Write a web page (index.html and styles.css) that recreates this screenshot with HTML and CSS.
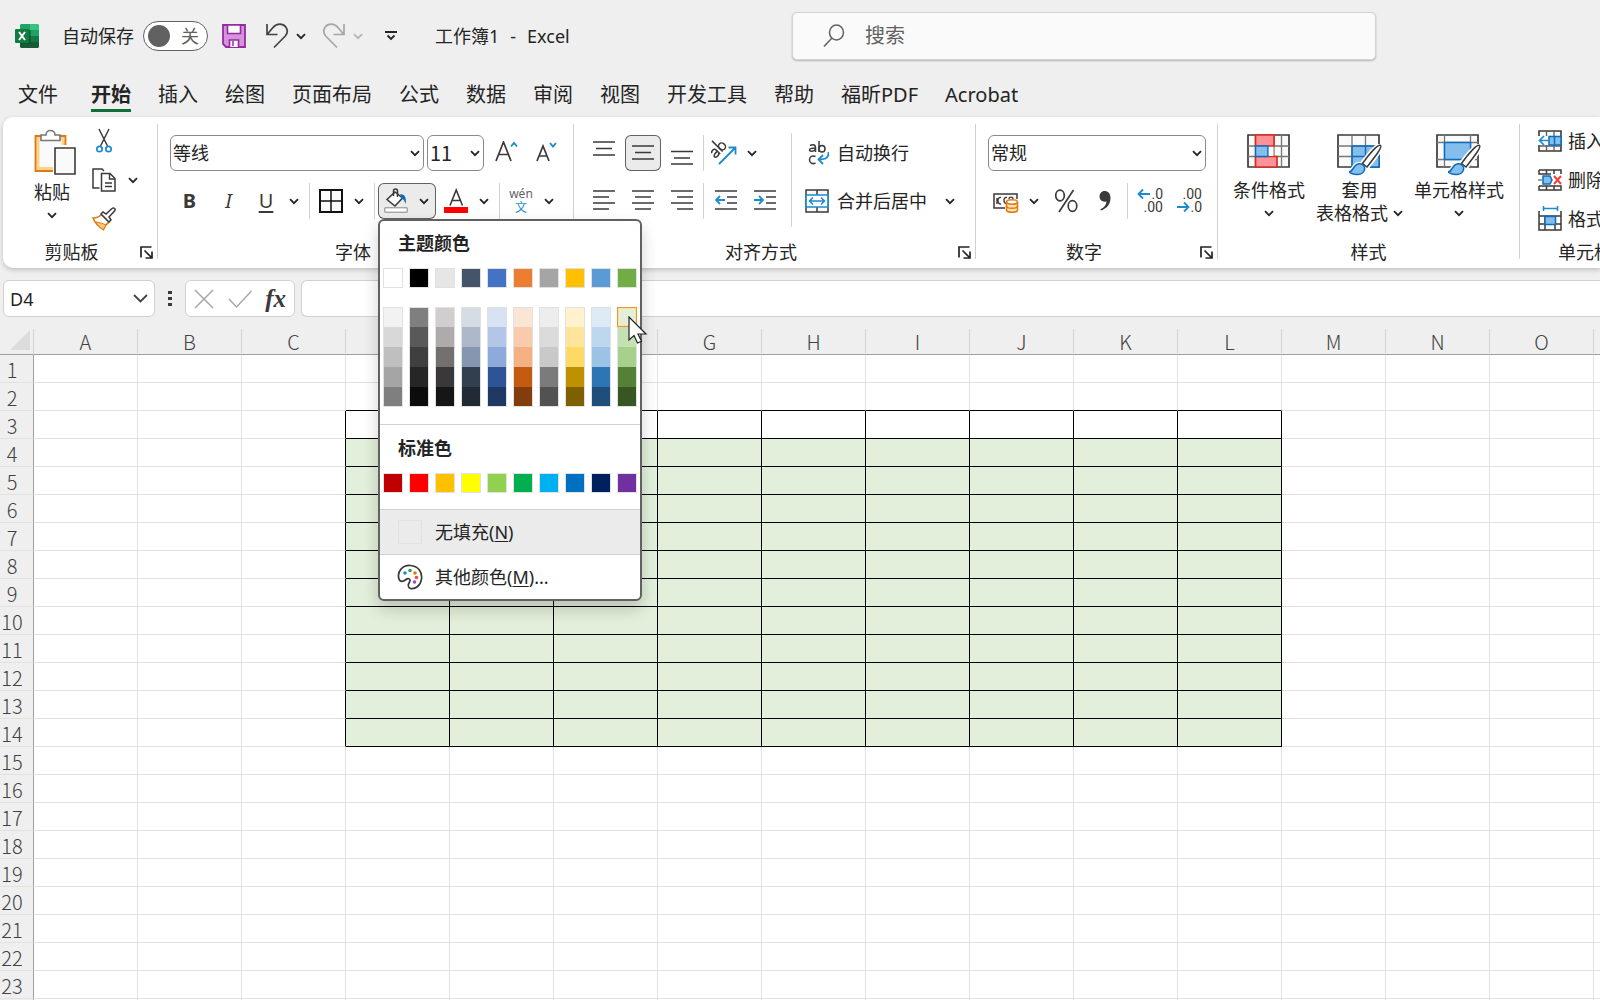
FILE: index.html
```html
<!DOCTYPE html>
<html lang="zh-CN">
<head>
  <meta charset="UTF-8" />
  <title>工作簿1 - Excel</title>
  <meta name="viewport" content="width=device-width, initial-scale=1.0" />
  <link rel="stylesheet" href="styles.css">
</head>
<body>
  <!-- shared icons -->
  <svg class="defs" width="0" height="0" aria-hidden="true">
    <symbol id="chev" viewBox="0 0 10 7"><path d="M1 1.2l4 4 4-4" fill="none" stroke="currentColor" stroke-width="1.8"/></symbol>
    <symbol id="launch" viewBox="0 0 13 13"><path d="M1 11.5V1h10.5M4.5 4.5l7 7M12 5.5V12H5.5" fill="none" stroke="currentColor" stroke-width="1.7"/></symbol>
    <symbol id="brush" viewBox="0 0 34 32">
      <path d="M31.500 1.500C33.500 3 27 11.500 18 23l-4.500-3.500C20 10.500 29 0 31.500 1.500z" fill="#fff" stroke="#fff" stroke-width="5"/>
      <path d="M0 28c4 0 4-7 9-8 5-1 8 3 6 7s-9 5-15 1z" fill="#83beec" stroke="#fff" stroke-width="4"/>
      <path d="M31.500 1.500C33.500 3 27 11.500 18 23l-4.500-3.500C20 10.500 29 0 31.500 1.500z" fill="#fff" stroke="#3b3a39" stroke-width="1.500"/>
      <path d="M0 28c4 0 4-7 9-8 5-1 8 3 6 7s-9 5-15 1z" fill="#83beec" stroke="#0f6cbd" stroke-width="1.500"/>
    </symbol>
  </svg>

  <header class="titlebar">
    <div class="quick">
      <svg class="logo" width="24" height="24" viewBox="0 0 24 24">
        <path d="M6 0h9v6H5V1z" fill="#21a366"/><path d="M15 0h8l1 1v5h-9z" fill="#33c481"/>
        <path d="M5 6h10v6H5z" fill="#107c41"/><path d="M15 6h9v6h-9z" fill="#21a366"/>
        <path d="M5 12h10v6H5z" fill="#185c37"/><path d="M15 12h9v6h-9z" fill="#107c41"/>
        <path d="M5 18h19v5l-1 1H6l-1-1z" fill="#185c37"/>
        <rect x="5" y="6" width="11" height="14" fill="#0b4a28" opacity=".5"/>
        <rect y="5" width="14" height="14" rx="1" fill="#107c41"/>
        <path d="M4 8l6 8M10 8l-6 8" stroke="#fff" stroke-width="2"/>
      </svg>
      <span class="autosave">自动保存</span>
      <button class="toggle" role="switch" aria-checked="false" aria-label="自动保存"><span class="knob"></span>关</button>
      <button class="icon-btn save" aria-label="保存">
        <svg width="24" height="24" viewBox="0 0 24 24"><path d="M1 1h22v22H4l-3-3z" fill="#d493da" stroke="#952ba0" stroke-width="1.800"/><path d="M5.500 1h13v8.500h-13zM7.500 23v-7h9v7" fill="#fafafa" stroke="#952ba0" stroke-width="1.600"/><path d="M11 17v5" stroke="#952ba0" stroke-width="1.500"/></svg>
      </button>
      <button class="icon-btn undo" aria-label="撤消">
        <svg width="24" height="26" viewBox="0 0 24 26"><path d="M2 1v10.500h10.500M2.500 11L8 4.500C12-.2 18 .3 20.800 4c2 3 1.700 6.500-.5 9L9 24.500" fill="none" stroke="#424242" stroke-width="1.700"/></svg>
      </button>
      <button class="icon-btn" aria-label="撤消选项"><svg width="10" height="7"><use href="#chev"/></svg></button>
      <button class="icon-btn redo" aria-label="恢复" disabled>
        <svg width="24" height="26" viewBox="0 0 24 26"><path d="M22 1v10.500H11.500M21.500 11L16 4.500C12-.2 6 .3 3.200 4c-2 3-1.700 6.500.5 9L15 24.500" fill="none" stroke="#a6a6a6" stroke-width="1.700"/></svg>
      </button>
      <button class="icon-btn faded" aria-label="恢复选项" disabled><svg width="10" height="7"><use href="#chev"/></svg></button>
      <button class="icon-btn customize" aria-label="自定义快速访问工具栏">
        <svg width="12" height="10" viewBox="0 0 12 10"><path d="M0 1h12M2.500 4.500L6 8l3.500-3.500" fill="none" stroke="#242424" stroke-width="1.800"/></svg>
      </button>
      <span class="doc-title"><span>工作簿1</span><span>-</span><span>Excel</span></span>
    </div>
    <label class="search">
      <svg width="22" height="24" viewBox="0 0 22 24"><ellipse cx="13.500" cy="8.500" rx="7" ry="7.500" fill="none" stroke="#616161" stroke-width="1.500"/><path d="M9 14L1 22.500" stroke="#616161" stroke-width="1.500"/></svg>
      <input type="text" placeholder="搜索" aria-label="搜索">
    </label>
  </header>

  <nav class="tabs">
    <a href="#" class="file">文件</a>
    <a href="#" class="active">开始</a>
    <a href="#">插入</a>
    <a href="#">绘图</a>
    <a href="#">页面布局</a>
    <a href="#">公式</a>
    <a href="#">数据</a>
    <a href="#">审阅</a>
    <a href="#">视图</a>
    <a href="#">开发工具</a>
    <a href="#">帮助</a>
    <a href="#">福昕PDF</a>
    <a href="#">Acrobat</a>
  </nav>

  <section class="ribbon">
    <!-- clipboard -->
    <div class="group clipboard">
      <div class="group-body">
        <button class="big paste">
          <svg width="48" height="46" viewBox="-6 0 48 46">
            <path d="M1.500 7h30v35h-30z" fill="#f9d48a" stroke="#e07a10" stroke-width="1.800"/><path d="M5.500 10h22v28h-22z" fill="#fafafa"/>
            <path d="M19 16h23v30H19z" fill="#fff"/>
            <path d="M7 11.500V6h5c0-6 9-6 9 0h5v5.500z" fill="#fff" stroke="#797775" stroke-width="1.600"/>
            <path d="M21 19h20v26H21z" fill="#fafafa" stroke="#3b3a39" stroke-width="1.600"/>
          </svg>
          <span>粘贴</span>
          <svg width="10" height="7"><use href="#chev"/></svg>
        </button>
        <div class="stack">
          <button aria-label="剪切"><svg width="24" height="26" viewBox="0 0 24 26"><path d="M7 1l8.500 17M17 1L8.500 18" fill="none" stroke="#3b3a39" stroke-width="1.500"/><circle cx="7.500" cy="21" r="2.700" fill="#fff" stroke="#1e8bcd" stroke-width="1.700"/><circle cx="16.500" cy="21" r="2.700" fill="#fff" stroke="#1e8bcd" stroke-width="1.700"/></svg></button>
          <button aria-label="复制"><svg width="24" height="24" viewBox="0 0 24 24"><path d="M7.500 20H1V1h9l2 2" fill="none" stroke="#3b3a39" stroke-width="1.500"/><path d="M9.500 5.500h8.500l5 5V23H9.500z" fill="#fff" stroke="#3b3a39" stroke-width="1.500"/><path d="M17.500 5.500V11H23M13 15h7M13 18.500h7" fill="none" stroke="#3b3a39" stroke-width="1.400"/></svg><svg class="after" width="10" height="7"><use href="#chev"/></svg></button>
          <button aria-label="格式刷"><svg width="24" height="24" viewBox="0 0 24 24"><path d="M1 11c4 0 6-1 8.500-3.500L17 15c-3 2-4.500 5-5.500 7.500C7 20 3 16 1 11z" fill="#fff" stroke="#e07a10" stroke-width="1.600"/><path d="M4 15c4 .5 7 1.500 10 3l-2.500 4.500C8 21 5.500 18.500 4 15z" fill="#f9c57a" stroke="#e07a10"/><path d="M9 7l2-2 3 2 6-5.500c2-1.500 4 .8 2.500 2.500L17 10l2 3-2 2z" fill="#fff" stroke="#3b3a39" stroke-width="1.500"/></svg></button>
        </div>
      </div>
      <div class="group-foot"><span>剪贴板</span><button aria-label="剪贴板设置"><svg width="13" height="13"><use href="#launch"/></svg></button></div>
    </div>

    <!-- font -->
    <div class="group font">
      <div class="group-body rows">
        <div class="row">
          <div class="combo family"><select aria-label="字体"><option>等线</option></select><svg width="10" height="7"><use href="#chev"/></svg></div>
          <div class="combo size"><select aria-label="字号"><option>11</option></select><svg width="10" height="7"><use href="#chev"/></svg></div>
          <button class="tool" aria-label="增大字号"><svg width="24" height="24" viewBox="0 0 24 24"><path d="M1 20L8.500 1 16 20M3.500 13.500h10" fill="none" stroke="#3b3a39" stroke-width="1.700"/><path d="M16 5.500L19 2l3 3.500" fill="none" stroke="#1e8bcd" stroke-width="1.900"/></svg></button>
          <button class="tool" aria-label="减小字号"><svg width="24" height="24" viewBox="0 0 24 24"><path d="M3 20L9 5l6 15M5 15h8" fill="none" stroke="#3b3a39" stroke-width="1.700"/><path d="M16 2L19 5.500 22 2" fill="none" stroke="#1e8bcd" stroke-width="1.900"/></svg></button>
        </div>
        <div class="row">
          <button class="tool letter"><b>B</b></button>
          <button class="tool letter"><i>I</i></button>
          <div class="split"><button class="letter" aria-label="下划线"><u>U</u></button><button aria-label="下划线选项"><svg width="10" height="7"><use href="#chev"/></svg></button></div>
          <span class="bar"></span>
          <div class="split"><button aria-label="边框"><svg width="24" height="24" viewBox="0 0 24 24"><path d="M1 1h22v22H1z" fill="#fafafa" stroke="#111" stroke-width="2"/><path d="M12 1v22M1 12h22" stroke="#111" stroke-width="1.500"/></svg></button><button aria-label="边框选项"><svg width="10" height="7"><use href="#chev"/></svg></button></div>
          <span class="bar"></span>
          <div class="split pressed">
            <button aria-label="填充颜色"><svg width="24" height="26" viewBox="0 0 24 26"><path d="M3 11.500l8-7.500 7.500 6-7.500 8z" fill="#fff" stroke="#3b3a39" stroke-width="1.600"/><path d="M9.500 8V3c0-2.600 4-2.600 4 0v6" fill="none" stroke="#3b3a39" stroke-width="1.500"/><path d="M16 6.500c4.500-1 7 3.500 5.500 9.500-1-3-2-5-4-6z" fill="#0f6cbd"/><path d="M.8 19.800h22.400v4.400H.8z" fill="#fff" stroke="#8a8886"/></svg></button>
            <button aria-label="填充颜色选项" aria-expanded="true"><svg width="10" height="7"><use href="#chev"/></svg></button>
            <div class="palette">
              <h2>主题颜色</h2>
              <div class="swatches" id="theme"></div>
              <div class="swatches shades" id="shades"></div>
              <h2 class="second">标准色</h2>
              <div class="swatches" id="standard"></div>
              <button class="item hover"><span class="none"></span><span>无填充(<u>N</u>)</span></button>
              <button class="item">
                <svg width="26" height="26" viewBox="0 0 26 26"><path d="M2 15C-.5 7 6 1 13.500 1.500 21 2 25.500 8 24.500 15 23.500 22 18 25.500 13.500 24.500c-3-1-2.500-4-1-6.500 1.500-3-1-4.500-3.500-2.500C6.500 17.500 3 18.500 2 15z" fill="#fff" stroke="#3b3a39" stroke-width="1.700"/><circle cx="8" cy="9" r="1.800" fill="#1e8bcd"/><circle cx="13" cy="6.500" r="1.800" fill="#2ea04f"/><circle cx="18" cy="9" r="1.800" fill="#e07a10"/><circle cx="19.500" cy="13.500" r="1.800" fill="#f04a4a"/><circle cx="17.500" cy="18" r="1.800" fill="#a347ba"/></svg>
                <span>其他颜色(<u>M</u>)...</span>
              </button>
              <svg class="pointer" width="20" height="29" viewBox="0 0 20 29"><path d="M1 1v23l5-4.500 3.500 7.500 4-1.800L10 18h8z" fill="#fff" stroke="#222" stroke-width="1.200"/></svg>
            </div>
          </div>
          <div class="split"><button aria-label="字体颜色"><svg width="24" height="26" viewBox="0 0 24 26"><path d="M6 17.500L12.200 2l6.300 15.500M8 12.500h8.500" fill="none" stroke="#3b3a39" stroke-width="1.600"/><path d="M0 19h24v6H0z" fill="#f00"/></svg></button><button aria-label="字体颜色选项"><svg width="10" height="7"><use href="#chev"/></svg></button></div>
          <span class="bar"></span>
          <div class="split"><button class="pinyin" aria-label="拼音"><span>wén</span><span class="blue">文</span></button><button aria-label="拼音选项"><svg width="10" height="7"><use href="#chev"/></svg></button></div>
        </div>
      </div>
      <div class="group-foot"><span>字体</span><button aria-label="字体设置"><svg width="13" height="13"><use href="#launch"/></svg></button></div>
    </div>

    <!-- alignment -->
    <div class="group align">
      <div class="group-body">
        <div class="rows">
          <div class="row">
            <button class="tool" aria-label="顶端对齐"><svg width="22" height="24" viewBox="0 0 22 24"><path d="M0 1h22M3 7.500h16M0 14h22" stroke="#3b3a39" stroke-width="1.500"/></svg></button>
            <button class="tool pressed" aria-label="垂直居中" aria-pressed="true"><svg width="22" height="24" viewBox="0 0 22 24"><path d="M0 5h22M3 11.500h16M0 18h22" stroke="#3b3a39" stroke-width="1.500"/></svg></button>
            <button class="tool" aria-label="底端对齐"><svg width="22" height="24" viewBox="0 0 22 24"><path d="M0 10.500h22M3 17h16M0 23h22" stroke="#3b3a39" stroke-width="1.500"/></svg></button>
            <span class="bar"></span>
            <div class="split"><button aria-label="方向"><svg width="26" height="26" viewBox="0 0 26 26"><path d="M8 24L24 8M17.500 7.500H24.500V14.500" fill="none" stroke="#1e8bcd" stroke-width="1.800"/><g fill="none" stroke="#3b3a39" stroke-width="1.500" transform="translate(-2 -2) rotate(-45 9 11)"><path d="M1.500 9.500C3 7.500 7 7.500 7 10.500V16M7 12C3 12 1 12.500 1 14s4 3 6 0M10.500 1v15"/><ellipse cx="13.700" cy="12" rx="3.200" ry="3.700"/></g></svg></button><button aria-label="方向选项"><svg width="10" height="7"><use href="#chev"/></svg></button></div>
          </div>
          <div class="row">
            <button class="tool" aria-label="左对齐"><svg width="22" height="24" viewBox="0 0 22 24"><path d="M0 2h22M0 8h16M0 14h22M0 20h16" stroke="#3b3a39" stroke-width="1.500"/></svg></button>
            <button class="tool" aria-label="居中"><svg width="22" height="24" viewBox="0 0 22 24"><path d="M0 2h22M3 8h16M0 14h22M3 20h16" stroke="#3b3a39" stroke-width="1.500"/></svg></button>
            <button class="tool" aria-label="右对齐"><svg width="22" height="24" viewBox="0 0 22 24"><path d="M0 2h22M6 8h16M0 14h22M6 20h16" stroke="#3b3a39" stroke-width="1.500"/></svg></button>
            <span class="bar"></span>
            <button class="tool" aria-label="减少缩进量"><svg width="22" height="24" viewBox="0 0 22 24"><path d="M0 2h22M12 8h10M12 14h10M0 20h22" stroke="#3b3a39" stroke-width="1.500"/><path d="M10 11H1.500M5 7l-4 4 4 4" fill="none" stroke="#1e8bcd" stroke-width="1.800"/></svg></button>
            <button class="tool" aria-label="增加缩进量"><svg width="22" height="24" viewBox="0 0 22 24"><path d="M0 2h22M12 8h10M12 14h10M0 20h22" stroke="#3b3a39" stroke-width="1.500"/><path d="M0 11h8.500M5 7l4 4-4 4" fill="none" stroke="#1e8bcd" stroke-width="1.800"/></svg></button>
          </div>
        </div>
        <div class="rows wrap">
          <button class="row text-btn"><svg width="24" height="26" viewBox="0 0 24 26"><g fill="none" stroke="#3b3a39" stroke-width="1.500"><path d="M5 5.500c4-2 5.500 0 5.500 2V12M10.500 8C5 8 4.500 9 4.500 10s4 2.500 6-1M14 1v11"/><ellipse cx="17" cy="8.700" rx="3" ry="3.300"/><path d="M10.500 16.500c-3-1.500-6 0-6 3.300s3 4.700 6 3.200"/></g><path d="M23.500 12c.5 5-2 7.500-9.500 7.500M18 15l-4.500 4.500L18 24" fill="none" stroke="#1e8bcd" stroke-width="1.800"/></svg><span>自动换行</span></button>
          <div class="row">
            <button class="row text-btn"><svg width="24" height="24" viewBox="0 0 24 24"><path d="M1 1h22v22H1zM12 1v22" fill="#fafafa" stroke="#3b3a39" stroke-width="1.500"/><path d="M1 6h22v12H1z" fill="#fff" stroke="#1e8bcd" stroke-width="1.700"/><path d="M4.500 12h15M8 8.500L4.500 12 8 15.500M16 8.500l3.500 3.500-3.500 3.500" fill="none" stroke="#1e8bcd" stroke-width="1.600"/></svg><span>合并后居中</span></button>
            <button class="more" aria-label="合并选项"><svg width="10" height="7"><use href="#chev"/></svg></button>
          </div>
        </div>
      </div>
      <div class="group-foot"><span>对齐方式</span><button aria-label="对齐设置"><svg width="13" height="13"><use href="#launch"/></svg></button></div>
    </div>

    <!-- number -->
    <div class="group number">
      <div class="group-body rows">
        <div class="row">
          <div class="combo format"><select aria-label="数字格式"><option>常规</option></select><svg width="10" height="7"><use href="#chev"/></svg></div>
        </div>
        <div class="row">
          <div class="split"><button aria-label="会计数字格式"><svg width="26" height="24" viewBox="0 0 26 24"><path d="M12 19H1V5h23v5" fill="#fafafa" stroke="#3b3a39" stroke-width="1.500"/><path d="M8 8.500c-4-1-4 7 0 6.500M14 8.500c-4-1-4 6 0 6M16 10c0-2.500 4-2.500 4 0M4 9v6" fill="none" stroke="#3b3a39" stroke-width="1.400"/><path d="M13.500 13v8c0 3 11 3 11 0v-8" fill="#fce1bb" stroke="#e07a10" stroke-width="1.600"/><ellipse cx="19" cy="13" rx="5.500" ry="2.200" fill="#fff" stroke="#e07a10" stroke-width="1.600"/><path d="M13.500 17c0 3 11 3 11 0" fill="none" stroke="#e07a10" stroke-width="1.500"/></svg></button><button aria-label="货币选项"><svg width="10" height="7"><use href="#chev"/></svg></button></div>
          <button class="tool" aria-label="百分比样式"><svg width="24" height="24" viewBox="0 0 24 24"><g fill="none" stroke="#3b3a39" stroke-width="1.700"><ellipse cx="6" cy="6.500" rx="4.300" ry="5.300"/><ellipse cx="18.500" cy="17" rx="4.300" ry="5.300"/><path d="M19.500 1L5 23"/></g></svg></button>
          <button class="tool" aria-label="千位分隔样式"><svg width="12" height="20" viewBox="0 0 12 20"><path d="M5.500 0C9 0 11.500 2.500 11.500 7c0 6.500-4 10.500-9.500 12.500l-.7-1.200C5 16.500 7 14.500 7.500 10.500 3.500 11.500.5 9 .5 5.500.5 2.500 2.500 0 5.500 0z" fill="#3b3a39"/></svg></button>
          <span class="bar"></span>
          <button class="tool decimals" aria-label="增加小数位数"><span><svg width="14" height="12" viewBox="0 0 14 12"><path d="M13 6H1.500M6 1.500L1.500 6 6 10.500" fill="none" stroke="#1e8bcd" stroke-width="1.800"/></svg>.0</span><span>.00</span></button>
          <button class="tool decimals" aria-label="减少小数位数"><span>.00</span><span><svg width="14" height="12" viewBox="0 0 14 12"><path d="M1 6h11.500M8 1.500L12.500 6 8 10.500" fill="none" stroke="#1e8bcd" stroke-width="1.800"/></svg>.0</span></button>
        </div>
      </div>
      <div class="group-foot"><span>数字</span><button aria-label="数字设置"><svg width="13" height="13"><use href="#launch"/></svg></button></div>
    </div>

    <!-- styles -->
    <div class="group looks">
      <div class="group-body">
        <button class="big">
          <svg width="46" height="42" viewBox="0 0 46 42"><path d="M2 1h41v32H2z" fill="#fafafa" stroke="#3b3a39" stroke-width="1.700"/><path d="M2 12h41M2 22.500h41M9.500 1v32M28 1v32M35.500 1v32" stroke="#797775" stroke-width="1.300"/><path d="M9.500 1H28v11H9.500zM9.500 22.500h21.500V33H9.500z" fill="#ff9199" stroke="#d92c20" stroke-width="1.700"/><path d="M9.500 12H22v10.500H9.500z" fill="#83beec" stroke="#0f6cbd" stroke-width="1.500"/><path d="M22.800 12.800h4.500v9h-4.500z" fill="#fafafa"/></svg>
          <span>条件格式</span>
          <svg width="10" height="7"><use href="#chev"/></svg>
        </button>
        <button class="big">
          <svg width="46" height="42" viewBox="0 0 46 42"><path d="M1 1h41v32H1z" fill="#fafafa" stroke="#3b3a39" stroke-width="1.700"/><path d="M15 12h27v21H15z" fill="#83beec"/><path d="M1 12h41M1 22.500h14M15 1v32M28.500 1v11" stroke="#797775" stroke-width="1.300"/><path d="M15 33V12h27v21zM15 22.500h27M28.500 12v21" fill="none" stroke="#0f6cbd" stroke-width="1.500"/><use href="#brush" x="12" y="10" width="34" height="32"/></svg>
          <span>套用</span>
          <span class="line">表格格式<svg width="10" height="7"><use href="#chev"/></svg></span>
        </button>
        <button class="big">
          <svg width="46" height="42" viewBox="0 0 46 42"><path d="M1 1h41v32H1z" fill="#fafafa" stroke="#3b3a39" stroke-width="1.700"/><path d="M1 8.500h41M1 25.500h41M8.500 1v32M34.500 1v32" stroke="#797775" stroke-width="1.300"/><path d="M8.500 8.500h26v17h-26z" fill="#83beec" stroke="#0f6cbd" stroke-width="1.500"/><use href="#brush" x="12" y="10" width="34" height="32"/></svg>
          <span>单元格样式</span>
          <svg width="10" height="7"><use href="#chev"/></svg>
        </button>
      </div>
      <div class="group-foot"><span>样式</span></div>
    </div>

    <!-- cells -->
    <div class="group cells">
      <div class="group-body">
        <div class="stack">
          <button><svg width="24" height="24" viewBox="0 0 24 24"><path d="M1 2h22v20H1z" fill="#fafafa" stroke="#3b3a39" stroke-width="1.600"/><path d="M8.500 2v20M16 2v20M1 17h22" stroke="#605e5c" stroke-width="1.300"/><path d="M0 7h12v9H0z" fill="#fff"/><path d="M11 7.500h12v8.500H11zM16.500 7.500V16" fill="#83beec" stroke="#0f6cbd" stroke-width="1.500"/><path d="M11 11.500H1.500M6 7l-4.500 4.500L6 16" fill="none" stroke="#1e8bcd" stroke-width="1.700"/></svg><span>插入</span></button>
          <button><svg width="24" height="24" viewBox="0 0 24 24"><path d="M1 2h22v4M1 2v4h12M1 18v4h22v-4H1M8.500 2v4M16 2v4M8.500 18v4M16 18v4" fill="none" stroke="#3b3a39" stroke-width="1.500"/><path d="M5 8h7l2 4-2 4H5z" fill="#83beec" stroke="#0f6cbd" stroke-width="1.500"/><path d="M0 12h4" stroke="#3b3a39"/><path d="M16 8l7 8M23 8l-7 8" stroke="#f0413c" stroke-width="2"/></svg><span>删除</span></button>
          <button><svg width="24" height="26" viewBox="0 0 24 26"><path d="M1 5v19h22V5M1 10h22M1 18h22M7 10v14M17 10v14" fill="none" stroke="#3b3a39" stroke-width="1.500"/><path d="M7 10.500h10.500v8H7z" fill="#83beec" stroke="#0f6cbd" stroke-width="1.500"/><path d="M5.500 2.500h14M5.500 0v5M19.500 0v5" stroke="#1e8bcd" stroke-width="1.600"/></svg><span>格式</span></button>
        </div>
      </div>
      <div class="group-foot"><span>单元格</span></div>
    </div>
  </section>

  <section class="formula-bar">
    <label class="name-box"><input type="text" value="D4" aria-label="名称框"><svg width="15" height="9" viewBox="0 0 15 9"><path d="M1 1l6.500 6.500L14 1" fill="none" stroke="#424242" stroke-width="1.800"/></svg></label>
    <svg class="dots" width="4" height="16" viewBox="0 0 4 16"><path d="M0 0h4v3H0zM0 6h4v3H0zM0 12h4v3H0z" fill="#3b3a39"/></svg>
    <div class="fx-box">
      <button aria-label="取消"><svg width="20" height="20" viewBox="0 0 20 20"><path d="M1 1l18 18M19 1L1 19" stroke="#a6a6a6" stroke-width="1.500"/></svg></button>
      <button aria-label="输入"><svg width="24" height="20" viewBox="0 0 24 20"><path d="M1 10l7.500 8L23.500 2" fill="none" stroke="#a6a6a6" stroke-width="1.500"/></svg></button>
      <button class="fx" aria-label="插入函数">fx</button>
    </div>
    <input class="formula" type="text" aria-label="编辑栏">
  </section>

  <main class="sheet">
    <table id="grid"></table>
  </main>

  <script src="script.js"></script>
</body>
</html>
```
FILE: styles.css
```css
:root {
  --bg: #efefef;
  --text: #242424;
  --line: #d1d1d1;
  --grid: #e1e1e1;
  --green: #0f703b;
  --fill: #e2efda;
  --ui: "Noto Sans", "Noto Sans CJK SC", sans-serif;
}

* {
  box-sizing: border-box;
}

body {
  margin: 0;
  height: 100vh;
  overflow: hidden;
  display: flex;
  flex-direction: column;
  background: var(--bg);
  color: var(--text);
  font-family: var(--ui);
  font-size: 18px;
  line-height: 24px;
}

button,
input,
select {
  font: inherit;
  color: inherit;
  border: none;
  background: none;
  padding: 0;
  margin: 0;
  outline: none;
}

svg {
  display: block;
  flex: none;
}

.defs {
  position: absolute;
}

/* title bar */
.titlebar {
  flex: none;
  height: 72px;
  display: grid;
  grid-template-columns: 49.5% 36.5%;
  align-items: center;
}

.quick {
  display: flex;
  align-items: center;
  padding-left: 15px;
  white-space: nowrap;
}

.autosave {
  margin: 0 9px 0 23px;
}

.toggle {
  display: flex;
  align-items: center;
  justify-content: space-between;
  width: 65px;
  height: 30px;
  padding: 0 8px 0 4px;
  border: 1px solid #616161;
  border-radius: 15px;
  background: #fff;
  color: #616161;
}

.knob {
  width: 22px;
  height: 22px;
  border-radius: 50%;
  background: #616161;
}

.save {
  margin-left: 14px;
}

.undo {
  margin: 0 7px 0 19px;
}

.redo {
  margin: 0 7px 0 16px;
}

.faded {
  color: #b5b5b5;
}

.customize {
  margin-left: 22px;
}

.doc-title {
  display: flex;
  gap: 11px;
  margin-left: 38px;
}

.search {
  display: flex;
  align-items: center;
  gap: 20px;
  height: 48px;
  padding-left: 30px;
  border: 1px solid #d4d4d4;
  border-radius: 5px;
  background: #fafafa;
  box-shadow: 0 1px 2px rgba(0, 0, 0, 0.25);
  font-size: 20px;
}

.search input {
  flex: 1;
  min-width: 0;
}

.search input::placeholder {
  color: #616161;
  opacity: 1;
}

/* tabs */
.tabs {
  flex: none;
  display: flex;
  gap: 27px;
  height: 45px;
  padding: 11px 18px 0;
  font-size: 20px;
  white-space: nowrap;
}

.tabs a {
  height: 29px;
  color: inherit;
  text-decoration: none;
}

.tabs .file {
  margin-right: 6px;
}

.tabs .active {
  font-weight: bold;
  border-bottom: 3px solid var(--green);
}

/* ribbon */
.ribbon {
  flex: none;
  display: flex;
  height: 151px;
  margin-left: 3px;
  padding: 7px 0 9px;
  background: #fff;
  border-radius: 10px 0 0 10px;
  box-shadow: 0 2px 5px rgba(0, 0, 0, 0.2);
  white-space: nowrap;
}

.group {
  flex: none;
  display: flex;
  flex-direction: column;
  border-right: 1px solid var(--line);
}

.group-body {
  flex: 1;
  display: flex;
}

.group-foot {
  display: flex;
  align-items: center;
  height: 14px;
}

.group-foot span {
  flex: 1;
  text-align: center;
}

.group-foot button {
  margin-right: 4px;
}

.clipboard { width: 155px; }
.font { width: 416px; padding-left: 12px; }
.align { width: 402px; padding-left: 10px; }
.number { width: 242px; padding-left: 12px; }
.looks { width: 302px; }
.cells { width: 136px; border: none; }

.font .group-foot,
.number .group-foot,
.align .group-foot {
  margin-left: -20px;
}

.rows {
  display: flex;
  flex-direction: column;
  gap: 12px;
  padding-top: 11px;
}

.row {
  display: flex;
  align-items: center;
  height: 36px;
}

.tool,
.split > button {
  display: flex;
  align-items: center;
  justify-content: center;
  width: 39px;
  height: 36px;
}

.split {
  position: relative;
  display: flex;
  width: 58px;
}

.split > button {
  width: 36px;
}

.split > button + button {
  width: 20px;
}

.pressed {
  background: #ebebeb;
  border-radius: 6px;
  box-shadow: inset 0 0 0 1px #616161;
}

.tool.pressed {
  width: 36px;
  margin: 0 1px 0 2px;
}

.split.pressed {
  margin-right: 2px;
}

.letter {
  font-size: 20px;
  color: #3b3a39;
}

.letter i {
  font-family: "Noto Sans", serif;
}

.letter u {
  text-underline-offset: 3px;
}

.bar {
  width: 1px;
  height: 36px;
  margin: 0 3px;
  background: var(--line);
}

.align .bar {
  margin: 0 2px;
}

.combo {
  position: relative;
  height: 36px;
  margin-right: 3px;
}

.combo.family { width: 254px; }
.combo.size { width: 57px; }
.combo.format { width: 218px; margin-right: 0; }

.combo select {
  width: 100%;
  height: 36px;
  padding-left: 2px;
  border: 1px solid #8a8a8a;
  border-radius: 6px;
  background: #fff;
  appearance: none;
}

.combo.size select {
  font-family: "Noto Sans CJK SC", sans-serif;
  font-size: 20px;
}

.combo svg {
  position: absolute;
  top: 15px;
  right: 4px;
  pointer-events: none;
}

.split .pinyin {
  flex-direction: column;
  font-size: 12px;
  line-height: 14px;
  color: #616161;
}

.pinyin .blue {
  color: #1e8bcd;
}

.decimals {
  flex-direction: column;
  align-items: stretch;
  padding: 0 7px;
  font-family: Roboto, sans-serif;
  font-size: 14px;
  line-height: 13px;
  color: #3b3a39;
}

.decimals span {
  display: flex;
  justify-content: flex-end;
}

.wrap {
  position: relative;
  margin-left: 7px;
  padding-left: 14px;
}

.rows.wrap::before {
  content: "";
  position: absolute;
  left: 0;
  top: 9px;
  width: 1px;
  height: 94px;
  background: var(--line);
}

.text-btn {
  gap: 8px;
}

.more {
  margin-left: 18px;
}

/* tall buttons */
.big {
  display: flex;
  flex-direction: column;
  align-items: center;
  line-height: 23px;
}

.big > svg:last-child {
  margin-top: 8px;
}

.paste {
  width: 78px;
  margin-left: 10px;
  padding-top: 5px;
}

.paste span {
  padding-top: 6px;
}

.looks .group-body {
  padding: 10px 15px 0;
  justify-content: space-between;
  align-items: flex-start;
}

.looks .big span {
  height: 23px;
}

.looks .big svg + span {
  margin-top: 3px;
}

.line {
  display: flex;
  align-items: center;
  gap: 5px;
}

.stack {
  display: flex;
  flex-direction: column;
  gap: 1px;
  margin-top: -2px;
}

.stack button {
  display: flex;
  align-items: center;
  height: 38px;
  gap: 6px;
}

.stack .after {
  margin-left: 6px;
}

.clipboard .stack {
  margin-left: 1px;
}

.cells .group-body {
  padding-left: 18px;
}

.cells .group-foot {
  padding-right: 6px;
}

/* fill colour menu */
.palette {
  position: absolute;
  z-index: 10;
  top: 36px;
  left: 0;
  width: 264px;
  border: 2px solid #616161;
  border-radius: 6px;
  background: #fff;
  box-shadow: 0 8px 16px rgba(0, 0, 0, 0.18);
}

.palette h2 {
  margin: 0;
  padding: 10px 18px 13px;
  font-size: 18px;
  line-height: 24px;
}

.palette .second {
  margin-top: 17px;
  border-top: 1px solid var(--line);
  padding-top: 11px;
}

.swatches {
  display: flex;
  gap: 6px;
  padding: 0 3px;
}

.swatches button {
  display: block;
  width: 20px;
  height: 20px;
  border: 1px solid #e1e1e1;
}

.shades {
  margin-top: 19px;
}

.shades button {
  border-width: 0 1px;
}

.shades button:first-child {
  border-top-width: 1px;
}

.shades button:last-child {
  border-bottom-width: 1px;
}

.shades .picked {
  border: 1px solid #f29436;
  box-shadow: inset 0 0 0 1px #ffe294;
}

.item {
  display: flex;
  align-items: center;
  gap: 12px;
  width: 100%;
  height: 45px;
  padding: 0 17px;
  border-top: 1px solid var(--line);
}

.swatches + .item {
  margin-top: 16px;
}

.item.hover {
  background: #ebebeb;
}

.item u {
  text-underline-offset: 2px;
}

.item .none {
  width: 24px;
  height: 24px;
  margin: 0 1px;
  border: 1px solid #e1e1e6;
}

.pointer {
  position: absolute;
  top: 95px;
  left: 248px;
}

/* formula bar */
.formula-bar {
  flex: none;
  display: flex;
  align-items: center;
  height: 61px;
  padding: 0 0 0 3px;
}

.name-box,
.fx-box,
.formula {
  height: 37px;
  border: 1px solid var(--line);
  border-radius: 6px;
  background: #fff;
}

.name-box {
  display: flex;
  align-items: center;
  width: 152px;
  padding: 0 6px;
}

.name-box input {
  flex: 1;
  min-width: 0;
}

.dots {
  margin: 0 13px;
}

.fx-box {
  display: flex;
  align-items: center;
  justify-content: space-between;
  width: 110px;
  padding: 0 8px;
}

.fx {
  font: italic bold 25px/30px "Liberation Serif", serif;
  color: #3b3a39;
}

.formula {
  flex: 1;
  margin-left: 6px;
  border-right: none;
  border-radius: 6px 0 0 6px;
}

/* sheet */
.sheet {
  flex: 1;
  min-height: 0;
  overflow: hidden;
}

#grid {
  width: 1698px;
  table-layout: fixed;
  border-collapse: separate;
  border-spacing: 0;
  background: #fff;
  font-family: "Noto Sans CJK SC", sans-serif;
  font-size: 20px;
  line-height: 25px;
}

#grid th,
#grid td {
  height: 28px;
  padding: 2px 0 0;
  border-right: 1px solid var(--grid);
  border-bottom: 1px solid var(--grid);
}

#grid th {
  background: var(--bg);
  color: #424242;
  font-weight: 300;
}

#grid thead th {
  height: 26px;
  padding: 0;
  line-height: 24px;
  border-bottom-color: #a0a0a0;
  border-right-color: #d4d4d4;
}

#grid thead .corner {
  width: 34px;
  padding: 0 3px 3px 10px;
}

#grid tbody th {
  padding-right: 9px;
  border-right-color: #a0a0a0;
}

#grid .edge-right {
  border-right-color: #000;
}

#grid .edge-bottom {
  border-bottom-color: #000;
}

#grid .filled {
  background: var(--fill);
}
```
FILE: script.js
```js
const theme = ['#ffffff', '#000000', '#e7e6e6', '#44546a', '#4472c4', '#ed7d31', '#a5a5a5', '#ffc000', '#5b9bd5', '#70ad47'];
const standard = ['#c00000', '#ff0000', '#ffc000', '#ffff00', '#92d050', '#00b050', '#00b0f0', '#0070c0', '#002060', '#7030a0'];
const shades = [
  ['#f2f2f2', '#d8d8d8', '#bfbfbf', '#a5a5a5', '#7f7f7f'],
  ['#7f7f7f', '#595959', '#3f3f3f', '#262626', '#0c0c0c'],
  ['#d0cece', '#aeabaa', '#757070', '#3a3838', '#171616'],
  ['#d6dce4', '#adb9ca', '#8496b0', '#323f4f', '#222a35'],
  ['#d9e2f3', '#b4c6e7', '#8eaadb', '#2f5496', '#1f3864'],
  ['#fbe5d5', '#f7cbac', '#f4b183', '#c55a11', '#833c0b'],
  ['#ededed', '#dbdbdb', '#c9c9c9', '#7b7b7b', '#525252'],
  ['#fff2cc', '#fee599', '#ffd965', '#bf9000', '#7f6000'],
  ['#deebf6', '#bdd7ee', '#9cc3e5', '#2e75b5', '#1e4e79'],
  ['#e2efd9', '#c5e0b3', '#a8d08d', '#538135', '#375623']
];

function swatch(color, cls) {
  return `<button class="${cls || ''}" aria-label="${color}" style="background:${color}"></button>`;
}

document.getElementById('theme').innerHTML = theme.map(c => swatch(c)).join('');
document.getElementById('standard').innerHTML = standard.map(c => swatch(c)).join('');
document.getElementById('shades').innerHTML = shades.map((col, i) =>
  '<div>' + col.map((c, j) => swatch(c, i === 9 && j === 0 ? 'picked' : '')).join('') + '</div>'
).join('');

// bordered range is D3:L14, filled from row 4
const cols = 'ABCDEFGHIJKLMNOP'.split('');
let html = '<thead><tr><th class="corner"><svg width="20" height="20" viewBox="0 0 20 20"><path d="M20 0v20H0z" fill="#dcdcdc"/></svg></th>';
html += cols.map(c => `<th>${c}</th>`).join('') + '</tr></thead><tbody>';

for (let r = 1; r <= 24; r++) {
  html += `<tr><th>${r}</th>`;
  cols.forEach((c, i) => {
    const cls = [];
    if (r >= 3 && r <= 14 && i >= 2 && i <= 11) cls.push('edge-right');
    if (r >= 2 && r <= 14 && i >= 3 && i <= 11) cls.push('edge-bottom');
    if (r >= 4 && r <= 14 && i >= 3 && i <= 11) cls.push('filled');
    html += `<td class="${cls.join(' ')}"></td>`;
  });
  html += '</tr>';
}
document.getElementById('grid').innerHTML = html + '</tbody>';
```
